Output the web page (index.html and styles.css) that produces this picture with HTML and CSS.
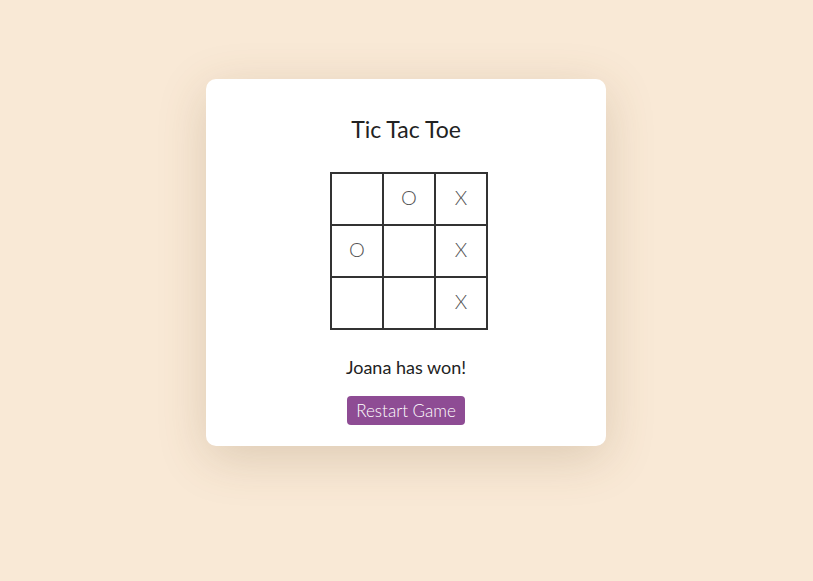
FILE: index.html
```html
<!DOCTYPE html>
<html>
<head>
<meta charset="utf-8">
<link rel="stylesheet" href="styles.css">
</head>
<body>
<main class="card">
  <h1 class="title">Tic Tac Toe</h1>
  <div class="board">
    <div class="cell"></div>
    <div class="cell">O</div>
    <div class="cell">X</div>
    <div class="cell">O</div>
    <div class="cell"></div>
    <div class="cell">X</div>
    <div class="cell"></div>
    <div class="cell"></div>
    <div class="cell">X</div>
  </div>
  <p class="status">Joana has won!</p>
  <button class="restart">Restart Game</button>
</main>
</body>
</html>
```
FILE: styles.css
```css
html, body {
  margin: 0;
  padding: 0;
}
body {
  background: #f9e9d6;
  font-family: Lato, "Open Sans", sans-serif;
  color: #222;
  min-height: 581px;
  box-sizing: border-box;
  padding: 79px 1px 0 0;
}
.card {
  width: 400px;
  height: 367px;
  box-sizing: border-box;
  margin: 0 auto;
  background: #fff;
  border-radius: 10px;
  box-shadow: 0 12px 50px rgba(110, 80, 40, 0.2);
  display: flex;
  flex-direction: column;
  align-items: center;
  padding-top: 36px;
}
.title {
  margin: 0;
  font-size: 23px;
  font-weight: 400;
  line-height: 28px;
}
.board {
  margin-top: 29px;
  margin-left: 6px;
  display: grid;
  grid-template-columns: repeat(3, 50px);
  grid-template-rows: repeat(3, 50px);
  gap: 2px;
  padding: 2px;
  background: #333;
}
.cell {
  background: #fff;
  display: flex;
  align-items: center;
  justify-content: center;
  font-size: 20px;
  font-weight: 300;
  color: #555;
  padding-bottom: 4px;
  box-sizing: border-box;
}
.status {
  margin: 26px 0 0;
  font-size: 18px;
  line-height: 22px;
}
.restart {
  margin-top: 18px;
  height: 29px;
  width: 118px;
  border: none;
  border-radius: 4px;
  background: #8e4c94;
  color: #fff;
  font-family: Lato, "Open Sans", sans-serif;
  font-size: 17px;
  font-weight: 300;
  padding: 0;
}
```
